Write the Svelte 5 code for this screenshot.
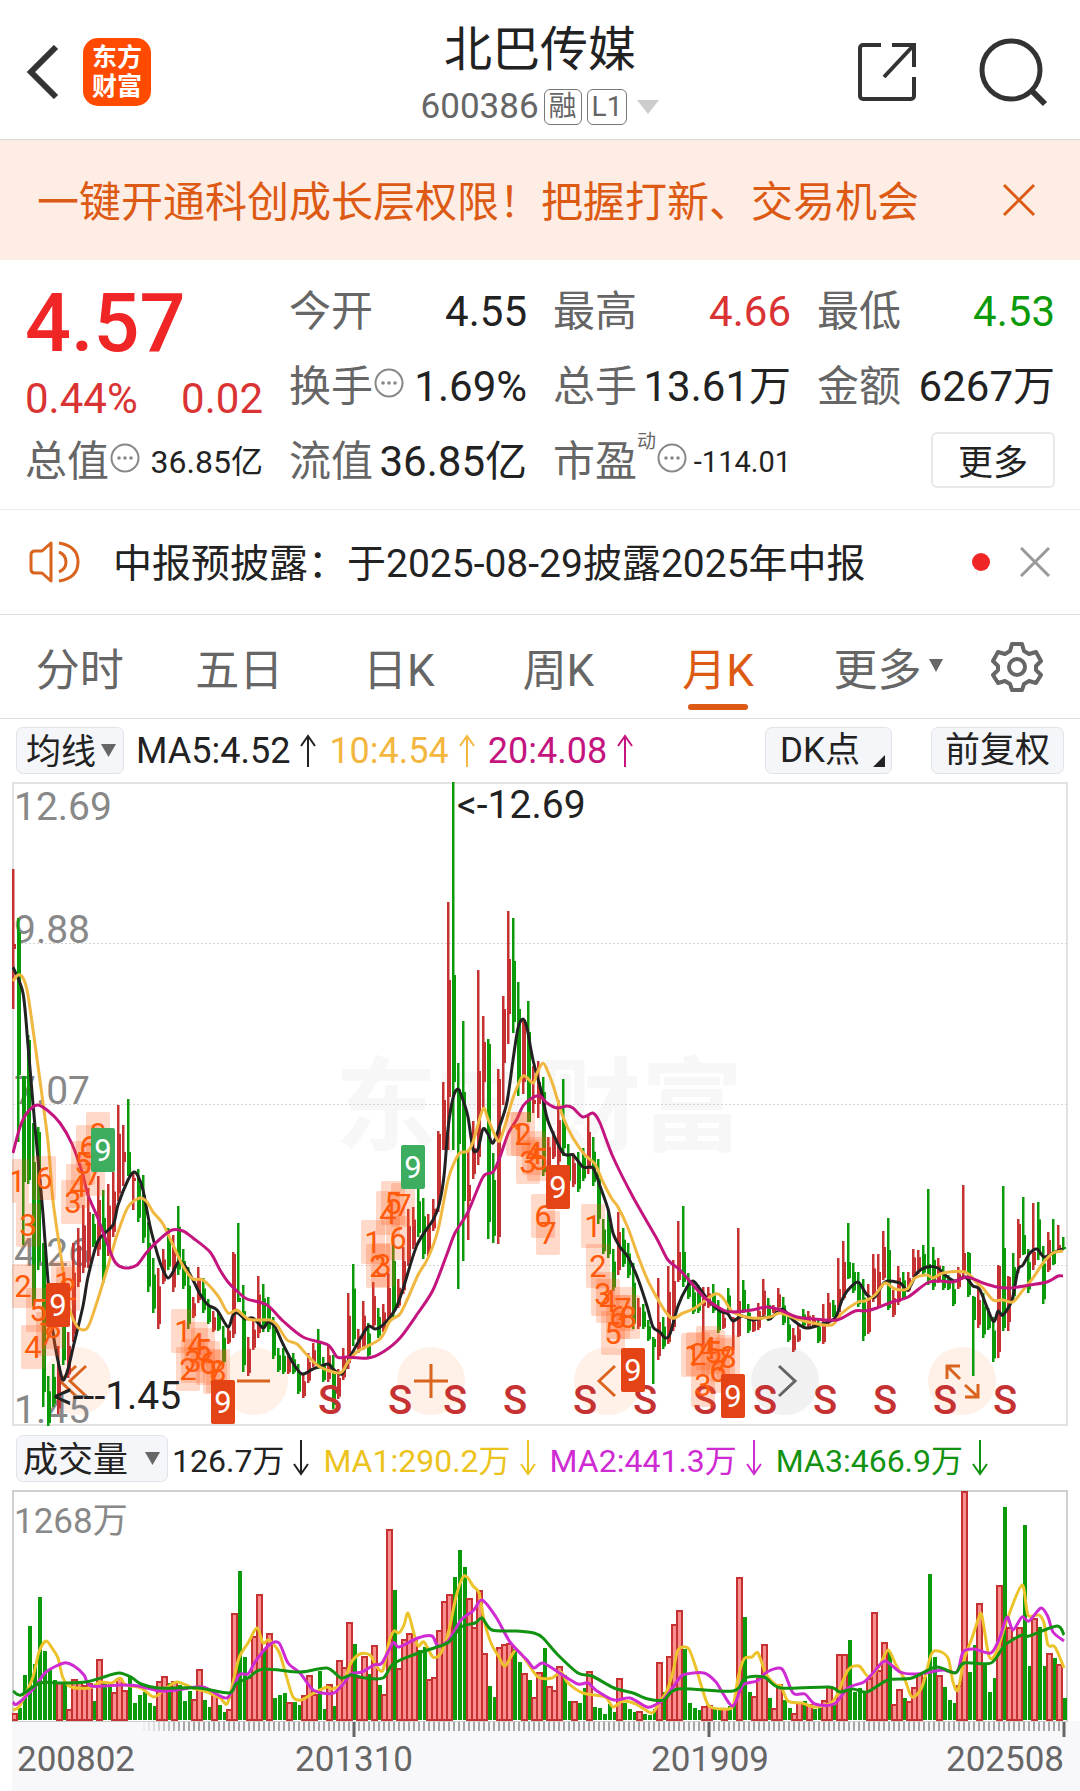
<script>
  const stats = [
    { label: '今开', value: '4.55' },
    { label: '最高', value: '4.66', tone: 'up' },
    { label: '最低', value: '4.53', tone: 'down' },
    { label: '换手', value: '1.69%', info: true },
    { label: '总手', value: '13.61万' },
    { label: '金额', value: '6267万' }
  ];

  const tabs = ['分时', '五日', '日K', '周K', '月K'];
  let activeTab = '月K';
  let showBanner = true;
  let showNotice = true;

  const priceAverages = [
    { text: 'MA5:4.52', color: '#222' },
    { text: '10:4.54', color: '#f3b63f' },
    { text: '20:4.08', color: '#c4157f' }
  ];

  const volumeAverages = [
    { text: '126.7万', color: '#222' },
    { text: 'MA1:290.2万', color: '#ecc31c' },
    { text: 'MA2:441.3万', color: '#cf2bd3' },
    { text: 'MA3:466.9万', color: '#119211' }
  ];

  // one candle per month: colour, high, low, then body top and bottom where known
  const candleData = `r,87,227,162,167 g,136,360,150,293 g,294,463,294,400 g,253,402,258,398 g,341,524,380,520 g,345,488,350,480
    g,461,625,470,610 g,594,645 g,582,625 r,564,632 g,524,583 r,550,596 r,461,560 r,446,505 r,423,491 r,406,486 g,432,465 r,394,474
    g,408,501 r,402,474 r,390,455 r,323,419 r,343,404,370,380 g,317,394,370,394 r,390,428,396,399 g,387,440 g,393,461 g,440,510 g,476,531 r,486,547
    r,467,502 g,446,488 r,453,510 g,424,493 g,467,507 g,485,547 r,515,536 r,485,521 g,496,531 g,517,542 r,529,550 g,529,549
    g,544,583 r,543,562 r,470,556,472,552 g,441,520,516,520 g,503,590 r,555,594 r,539,568 r,494,556 g,502,550 g,515,550 g,535,577 g,566,590
    g,566,592 r,571,592 g,571,592 g,582,612 r,592,616 r,571,601 r,561,585 g,547,587 g,575,600 r,562,600 g,573,627 r,587,617
    r,566,598 r,511,587 g,482,564 r,547,571 r,519,568 g,541,576 r,500,547 g,526,556 r,522,550 r,491,541 g,455,535 r,497,526
    r,465,512 r,427,484 r,425,467 g,404,455 g,416,477 r,432,474 r,417,449 r,349,430,352,420 r,300,368,318,368 r,120,368,198,315
    g,0,368,193,300 g,281,507,307,362 g,239,479,310,419 r,368,458,403,419 r,339,397,366,392 r,188,383,289,375 r,234,328,260,300
    g,257,457,262,440 g,371,461 r,287,462,297,455 r,214,323,227,281 r,129,262,177,232 g,136,251,179,240 g,200,314,227,300 r,236,312,240,300
    g,219,340,250,340 r,284,331,318,322 r,279,336,300,322 g,295,394,310,390 r,355,389 r,349,377 r,318,385 g,297,374,340,366 g,362,402
    r,371,405 g,370,410 g,366,399 r,332,392 g,355,404 g,377,442 g,437,472 g,427,476 g,467,509 r,430,493,450,488 g,446,485 g,461,496
    g,481,547 r,516,547 g,522,547 g,538,559 g,555,602,557,565 r,496,578,540,574 g,535,567 r,484,562,510,560 r,478,549,499,545 r,439,500,470,498
    g,424,505,470,500 g,491,517 g,501,532 g,503,531 r,505,563,520,524 r,505,526 g,502,531 g,518,551 r,531,547 g,506,531 r,535,568,536,538
    r,446,555,519,554 g,498,531 g,522,551 r,535,550 r,521,548 r,497,536 g,516,539 r,523,531 r,506,527 g,515,543 g,535,560
    r,546,570 r,542,560 g,527,545 r,529,545 r,533,545 g,538,561 r,522,562,540,560 r,511,543 g,518,535 r,476,536,507,530 r,459,518,480,516
    g,441,497,480,496 g,481,511 g,490,525 g,497,559 r,502,552,515,550 r,472,520 r,472,525,490,523 r,449,498,465,496 g,436,528,468,526
    r,508,535 r,484,523 g,490,518 r,490,510 r,467,495 r,468,492 g,463,493 g,407,503,482,498 g,465,508 r,476,501 g,484,508
    g,493,508 g,500,524 r,485,507 r,403,495,471,490 g,470,515,471,513 g,514,594,515,538 r,506,546 g,511,556 g,526,548 g,535,580
    r,483,576,484,570 g,404,549,466,546 r,494,549,495,540 g,471,518 r,437,491,442,476 g,415,473,453,472 g,467,511 r,421,488,470,483
    g,420,478 g,464,522 r,450,490,458,488 g,437,483,470,482 r,443,470,463,468 g,455,468,465,467`;

  const candles = candleData.trim().split(/\s+/).map((item, i) => {
    const [side, high, low, top, bottom] = item.split(',');
    const h = +high;
    const l = +low;
    return {
      x: 5 * i,
      h,
      l,
      top: top ? +top : h + (l - h) * 0.3,
      bottom: bottom ? +bottom : l - (l - h) * 0.08,
      color: side === 'r' ? '#c63232' : '#0a9a0a'
    };
  });

  const ma5 = '1,185 11,211 16,263 21,322 26,377 31,432 36,499 41,550 46,579 51,598 56,587 61,566 71,524 76,495 86,459 101,443 106,423 116,398 122,390 126,394 131,408 138,444 146,474 151,488 156,496 161,490 167,479 173,484 181,498 188,512 196,523 205,528 216,545 221,533 226,531 233,537 241,536 251,546 256,540 263,545 271,562 281,581 290,592 301,587 316,582 321,587 330,592 338,575 351,552 357,544 363,547 371,543 383,528 391,507 405,463 421,438 427,423 432,394 436,347 441,316 446,307 451,318 456,335 461,367 466,367 471,347 476,352 481,361 488,343 495,320 501,278 506,246 511,237 515,246 521,278 530,312 536,339 551,371 561,373 571,385 581,386 588,404 596,427 601,451 608,465 616,475 626,497 635,524 641,545 648,550 653,556 658,552 666,524 675,505 681,499 688,507 698,520 708,529 716,532 721,539 730,534 741,538 753,535 758,537 770,527 781,538 794,546 810,542 823,536 830,518 836,508 846,500 855,513 863,515 873,500 888,501 896,508 905,491 915,485 926,486 933,493 943,499 953,495 961,504 968,508 981,539 986,529 991,533 1000,518 1006,488 1011,483 1018,471 1025,467 1032,475 1041,471 1051,467';
  const ma10 = '1,199 6,193 11,196 16,213 26,284 36,360 41,419 51,488 56,520 61,537 68,547 76,545 85,520 96,484 105,453 116,425 128,416 135,420 141,430 151,442 161,463 171,484 181,497 191,498 206,514 216,531 225,528 236,537 248,538 258,538 265,543 275,558 285,562 295,573 308,585 328,591 336,580 346,569 368,557 378,539 388,532 396,516 406,493 416,476 426,448 436,398 443,379 448,371 456,369 461,360 471,327 476,337 486,359 491,350 501,316 511,294 521,301 525,291 531,281 536,290 541,303 551,335 561,356 573,373 583,382 591,400 600,417 606,425 616,446 626,474 638,503 658,535 671,531 683,526 703,512 711,516 721,530 740,536 758,535 768,531 785,537 801,541 820,543 830,531 846,520 853,519 863,513 873,501 883,507 895,507 903,496 915,493 921,496 931,491 953,490 965,501 971,506 981,518 991,518 1001,520 1011,508 1021,496 1031,481 1041,471 1051,469';
  const ma20 = '1,371 8,345 15,331 25,323 35,328 48,341 60,362 70,390 76,413 85,434 95,461 103,480 113,486 125,483 135,470 148,457 160,448 171,449 181,456 198,470 208,488 216,500 226,510 235,517 255,523 271,539 291,555 316,563 325,575 335,575 356,576 371,570 388,556 406,531 421,508 435,472 443,451 456,430 471,395 481,390 488,375 496,352 505,337 511,324 520,316 528,314 535,321 545,326 555,324 561,326 571,335 581,331 588,341 601,375 621,415 645,457 656,478 668,488 681,503 693,516 711,528 721,530 740,528 755,525 768,528 785,535 803,537 825,538 843,529 853,529 865,526 880,520 896,515 915,501 928,499 941,500 955,495 971,501 985,505 998,506 1018,503 1035,500 1046,494 1051,494';

  // sequence counts drawn over the candles: digit, x, y
  const counts = [
    [1, 5, 399], [6, 32, 396], [3, 16, 443], [2, 11, 504], [5, 26, 528], [4, 21, 565], [7, 36, 552], [8, 41, 545],
    [1, 51, 501], [2, 56, 507], [3, 61, 420], [4, 66, 404], [5, 71, 381], [6, 76, 365], [7, 81, 392], [8, 86, 352],
    [1, 171, 549], [2, 176, 587], [3, 181, 579], [4, 184, 562], [5, 191, 568], [6, 196, 581], [7, 203, 590], [8, 206, 589],
    [1, 361, 460], [2, 366, 484], [3, 371, 483], [4, 376, 431], [5, 381, 421], [6, 386, 456], [7, 391, 423],
    [1, 506, 352], [2, 511, 352], [3, 516, 380], [4, 522, 371], [5, 527, 377], [6, 531, 434], [7, 536, 451],
    [1, 581, 444], [2, 586, 484], [3, 591, 512], [4, 596, 519], [5, 601, 551], [6, 606, 535], [7, 611, 527], [8, 616, 535],
    [1, 681, 573], [2, 686, 572], [3, 691, 603], [4, 696, 566], [5, 701, 570], [6, 706, 589], [7, 711, 578], [8, 716, 575]
  ];

  const nines = [
    { x: 46, y: 523, color: '#e34315' },
    { x: 91, y: 368, color: '#3dae60' },
    { x: 211, y: 620, color: '#e34315' },
    { x: 401, y: 385, color: '#3dae60' },
    { x: 546, y: 405, color: '#e34315' },
    { x: 621, y: 588, color: '#e34315' },
    { x: 721, y: 614, color: '#e34315' }
  ];

  const sells = [318, 388, 443, 503, 573, 633, 693, 753, 813, 873, 933, 993];

  const priceLevels = [
    { text: '12.69', y: 38 },
    { text: '9.88', y: 161 },
    { text: '7.07', y: 322 },
    { text: '4.26', y: 484 },
    { text: '1.45', y: 641 }
  ];

  // volume bars: colour and top edge
  const volumeData = `r223 g218 g185 g136 g174 g107 g161 g180 g190 r192 g192 r219 r189 r192 r195 r193 g211 r169 g193 g192 r202 r188 r200 g187 g213
    g205 g202 g213 g216 r191 r186 g193 r191 g195 g211 g201 r209 r179 g210 g217 r203 g215 g222 r219 r123 g81 g167 r187 r146 r104
    g160 r143 g208 g205 g203 r212 g212 g215 r205 r185 r204 g181 g219 r194 g216 r170 r177 r132 g154 r187 r166 g184 r155 g195 r204
    r39 g100 r178 r149 r143 r150 g160 g157 r189 r187 r140 r111 r104 g87 g60 g77 r108 r137 r100 r163 g196 g207 r157 r154 r153
    g159 g172 r183 g190 r207 r182 g158 r196 r200 r176 g185 g211 r211 g213 g198 r181 g217 g218 g224 g214 g222 r188 g213 g219 g222
    r221 g224 g225 g219 r172 g202 r166 r134 r120 g159 g213 g218 g220 r216 r215 g219 g220 r218 g216 g212 r87 g127 g202 r206 r188
    r154 g208 r218 r194 g210 g218 r223 r212 g211 r214 g219 g218 r210 r196 g215 r164 r164 g150 g202 g198 g203 r188 r122 r180 r152
    g162 r214 r199 g208 r211 r197 r184 g187 g84 g167 r185 g197 g210 g213 r195 r1 g182 g155 r113 g175 g202 g188 r95 g17 r137
    r147 r137 g35 g176 r128 g137 g176 r163 g168 r174 g208`;

  const volumes = volumeData.trim().split(/\s+/).map((item, i) => ({
    x: 2 + 5 * i,
    y: +item.slice(1),
    up: item[0] === 'r'
  }));

  const vol1 = '1,220 7,217 14,203 21,187 27,162 34,151 40,158 46,168 51,188 59,197 78,198 88,192 100,193 108,188 114,195 129,198 142,207 153,199 165,192 181,198 195,202 208,208 215,214 220,197 227,168 236,153 245,138 251,153 257,150 267,162 274,185 281,207 289,210 300,204 315,197 320,199 331,193 339,173 348,164 358,165 365,177 371,180 377,152 382,141 387,143 392,135 396,123 401,140 406,156 412,152 421,167 429,163 437,140 444,107 451,87 456,88 461,96 467,103 472,130 479,153 487,167 493,176 504,160 515,172 526,187 540,188 549,182 556,193 571,203 593,207 601,217 611,211 624,214 640,223 647,212 654,203 661,182 666,160 676,158 683,175 690,198 697,216 711,219 721,216 726,188 732,169 740,167 746,163 754,184 764,195 769,196 776,211 790,213 803,217 819,213 826,203 836,180 847,176 857,187 867,177 876,160 884,175 893,190 900,207 910,197 919,165 926,161 936,168 941,192 946,200 952,170 960,148 967,127 970,126 977,166 984,163 995,130 1010,95 1016,125 1027,125 1032,133 1036,155 1043,157 1052,178';
  const vol2 = '1,212 5,214 22,198 34,182 52,173 62,176 72,185 79,196 109,195 126,196 148,201 165,200 191,197 215,208 227,185 236,184 243,172 257,155 267,153 276,173 288,183 300,199 310,203 322,203 332,193 339,184 350,182 362,175 370,173 381,153 387,157 406,148 420,146 426,156 437,150 449,130 461,121 470,110 484,127 498,152 515,170 522,178 531,173 549,184 566,194 576,193 585,201 602,210 618,208 635,217 643,215 652,209 662,196 671,185 692,183 704,192 710,202 721,216 731,195 745,191 755,182 770,179 781,203 793,204 803,214 822,214 836,198 852,192 862,182 873,171 888,182 902,184 919,182 931,180 945,182 951,162 962,159 979,163 988,147 995,127 1001,140 1010,127 1017,131 1029,118 1036,127 1041,142 1052,151';
  const vol3 = '1,201 9,205 28,193 50,193 74,192 95,186 107,183 119,187 129,194 146,198 186,198 217,203 224,194 236,188 251,179 288,182 315,178 329,188 339,185 353,188 371,188 381,174 401,165 422,158 437,152 449,137 463,133 470,128 480,140 505,141 522,143 531,148 545,164 566,183 580,186 602,198 621,203 636,209 652,210 666,199 721,201 733,188 752,187 769,198 817,197 828,202 841,199 855,202 876,190 900,188 924,177 943,183 952,173 979,173 993,155 1010,145 1017,146 1045,136 1052,145';

  const ticks = [];
  for (let i = 26; i < 211; i++) {
    ticks.push({ x: 2 + 5 * i, opacity: Math.min(1, (i - 25) / 9) });
  }

  // Catmull-Rom through the points, written as cubic segments
  function smooth(data) {
    const p = data.split(' ').map((pair) => pair.split(',').map(Number));
    let d = `M${p[0][0]} ${p[0][1]}`;
    for (let i = 0; i < p.length - 1; i++) {
      const a = p[i - 1] || p[i];
      const b = p[i];
      const c = p[i + 1];
      const e = p[i + 2] || c;
      d += `C${b[0] + (c[0] - a[0]) / 7} ${b[1] + (c[1] - a[1]) / 7} ${c[0] - (e[0] - b[0]) / 7} ${c[1] - (e[1] - b[1]) / 7} ${c[0]} ${c[1]}`;
    }
    return d;
  }
</script>

{#snippet info()}
  <svg class="info" viewBox="0 0 30 30" aria-hidden="true">
    <circle cx="15" cy="15" r="13.5" fill="none" stroke="#888" stroke-width="2" />
    <circle cx="9" cy="15" r="1.8" fill="#888" />
    <circle cx="15" cy="15" r="1.8" fill="#888" />
    <circle cx="21" cy="15" r="1.8" fill="#888" />
  </svg>
{/snippet}

<main>
  <header>
    <div class="side">
      <button class="icon-button" aria-label="返回">
        <svg width="32" height="54" viewBox="0 0 32 54"><path d="M29 2 4 27l25 25" fill="none" stroke="#333" stroke-width="6" /></svg>
      </button>
      <a class="logo" href="#home">东方<br />财富</a>
    </div>
    <div class="title">
      <h1>北巴传媒</h1>
      <div class="code">
        <span>600386</span>
        <span class="tag">融</span>
        <span class="tag">L1</span>
        <svg class="code-arrow" width="22" height="14" viewBox="0 0 22 14"><path d="M0 0h22L11 14z" fill="#ccc" /></svg>
      </div>
    </div>
    <div class="side right">
      <button class="icon-button" aria-label="分享">
        <svg width="60" height="60" viewBox="0 0 60 60" fill="none" stroke="#333" stroke-width="4">
          <path d="M24 3H6a3 3 0 0 0-3 3v48a3 3 0 0 0 3 3h48a3 3 0 0 0 3-3V35" />
          <path d="M35 3h22v22M56 4 27 35" />
        </svg>
      </button>
      <button class="icon-button" aria-label="搜索">
        <svg width="70" height="70" viewBox="0 0 70 70" fill="none" stroke="#333" stroke-width="5">
          <circle cx="33" cy="33" r="29" />
          <path d="m53 53 14 14" stroke-width="6" />
        </svg>
      </button>
    </div>
  </header>

  {#if showBanner}
    <section class="banner">
      <a href="#open">一键开通科创成长层权限！把握打新、交易机会</a>
      <button class="icon-button" aria-label="关闭横幅" on:click={() => (showBanner = false)}>
        <svg width="34" height="34" viewBox="0 0 34 34"><path d="m2 2 30 30M32 2 2 32" stroke="#dd5a14" stroke-width="3" /></svg>
      </button>
    </section>
  {/if}

  <section class="quote">
    <div class="price">
      <strong>4.57</strong>
      <div class="change"><span>0.44%</span><span>0.02</span></div>
    </div>
    {#each stats as stat}
      <div class="stat">
        <span class="label">{stat.label}</span>
        {#if stat.info}{@render info()}{/if}
        <span class="value {stat.tone || ''}">{stat.value}</span>
      </div>
    {/each}
    <div class="stat">
      <span class="label">总值</span>
      {@render info()}
      <span class="value small">36.85亿</span>
    </div>
    <div class="stat">
      <span class="label">流值</span>
      <span class="value">36.85亿</span>
    </div>
    <div class="stat">
      <span class="label">市盈</span>
      <sup>动</sup>
      {@render info()}
      <span class="value smaller">-114.01</span>
    </div>
    <div class="stat">
      <button class="more">更多</button>
    </div>
  </section>

  {#if showNotice}
    <section class="notice">
      <svg width="52" height="44" viewBox="0 0 52 44" fill="none" stroke="#d9641e" stroke-width="3">
        <path d="M22 3v38l-9-8H6q-4 0-4-4V15q0-4 4-4h7z" stroke-linejoin="round" />
        <path d="M30 12q7 3 7 10t-7 10M30 3q19 3 19 19T30 41" />
      </svg>
      <a href="#report">中报预披露：于2025-08-29披露2025年中报</a>
      <i class="dot"></i>
      <button class="icon-button" aria-label="关闭公告" on:click={() => (showNotice = false)}>
        <svg width="30" height="30" viewBox="0 0 30 30"><path d="m1 1 28 28M29 1 1 29" stroke="#999" stroke-width="3" /></svg>
      </button>
    </section>
  {/if}

  <nav>
    {#each tabs as tab}
      <button class="tab" class:active={tab === activeTab} on:click={() => (activeTab = tab)}>{tab}</button>
    {/each}
    <button class="tab">
      更多<svg class="tab-arrow" width="14" height="13" viewBox="0 0 14 13"><path d="M0 0h14L7 13z" fill="#666" /></svg>
    </button>
    <button class="icon-button" aria-label="设置">
      <svg width="52" height="52" viewBox="0 0 52 52" fill="none" stroke="#666" stroke-width="4" stroke-linejoin="round">
        <path d="M21 3h10l2 7 5 3 7-2 5 9-5 5v4l5 5-5 8-7-2-5 3-2 6H21l-2-6-5-3-7 2-5-8 5-5v-4l-5-5 5-9 7 2 5-3z" />
        <circle cx="26" cy="26" r="8" />
      </svg>
    </button>
  </nav>

  <div class="indicator">
    <div class="picker">
      <select aria-label="主图指标"><option>均线</option></select>
      <svg width="15" height="13" viewBox="0 0 15 13"><path d="M0 0h15L7.500 13z" fill="#666" /></svg>
    </div>
    <div class="averages">
      {#each priceAverages as item}
        <span class="average" style="color: {item.color}">
          {item.text}
          <svg width="18" height="34" viewBox="0 0 18 34" fill="none" stroke="currentColor" stroke-width="2"><path d="M9 33V2M2 12l7-10 7 10" /></svg>
        </span>
      {/each}
    </div>
    <button class="chip dk">DK点<svg width="12" height="12" viewBox="0 0 12 12"><path d="M12 0v12H0z" fill="#222" /></svg></button>
    <button class="chip">前复权</button>
  </div>

  <div class="chart">
    <div class="controls">
      <button aria-label="最早">
        <svg viewBox="0 0 68 68"><path d="M33 19 17 34l16 15M43 19 27 34l16 15" /></svg>
      </button>
      <button aria-label="缩小"><svg viewBox="0 0 68 68"><path d="M17 34h33" /></svg></button>
      <button aria-label="放大"><svg viewBox="0 0 68 68"><path d="M17 34h34M34 17v34" /></svg></button>
      <button aria-label="向左"><svg viewBox="0 0 68 68"><path d="M41 19 25 34l16 15" /></svg></button>
      <button class="gray" aria-label="向右"><svg viewBox="0 0 68 68"><path d="m28 19 16 15-16 15" /></svg></button>
      <button aria-label="全屏">
        <svg viewBox="0 0 68 68"><path d="M19 32V19h13M20 20l12 12M37 50h13V37M49 49 37 38" /></svg>
      </button>
    </div>
    <svg class="plot" viewBox="0 0 1056 644">
      <rect x="1" y="1" width="1054" height="642" fill="none" stroke="#e2e2e2" stroke-width="2" />
      <text class="watermark" x="527" y="361">东方财富</text>
      {#each [161, 322, 483] as y}
        <path d="M1 {y}.500H1055" stroke="#d4d4d4" stroke-dasharray="2 2" />
      {/each}
      {#each priceLevels as level}
        <text class="level" x="2" y={level.y}>{level.text}</text>
      {/each}
      {#each candles as c}
        <rect x={c.x} y={c.h} width="2.5" height={c.l - c.h} fill={c.color} />
        <rect x={c.x} y={c.top} width="4" height={Math.max(2, c.bottom - c.top)} fill={c.color} />
      {/each}
      <path class="line" d={smooth(ma5)} stroke="#222" />
      <path class="line" d={smooth(ma10)} stroke="#f0b840" />
      <path class="line" d={smooth(ma20)} stroke="#c4157f" />
      {#each sells as x}
        <text class="sell" {x} y="632">S</text>
      {/each}
      {#each counts as [digit, x, y]}
        <rect x={Math.max(0, x - 12)} y={y - 22} width={Math.min(24, x + 12)} height="44" rx="2" fill="#ff5a14" opacity="0.23" />
        <text class="count" {x} y={y + 11}>{digit}</text>
      {/each}
      {#each nines as nine}
        <rect x={nine.x - 12} y={nine.y - 22} width="24" height="44" rx="2" fill={nine.color} />
        <text class="count nine" x={nine.x} y={nine.y + 11}>9</text>
      {/each}
      <text class="note" x="445" y="36">&lt;-12.69</text>
      <text class="note" x="41" y="627">&lt;---1.45</text>
    </svg>
  </div>

  <div class="indicator volume">
    <div class="picker">
      <select aria-label="副图指标"><option>成交量</option></select>
      <svg width="15" height="13" viewBox="0 0 15 13"><path d="M0 0h15L7.500 13z" fill="#666" /></svg>
    </div>
    <div class="averages">
      {#each volumeAverages as item}
        <span class="average" style="color: {item.color}">
          {item.text}
          <svg width="16" height="36" viewBox="0 0 16 36" fill="none" stroke="currentColor" stroke-width="2"><path d="M8 0v34M1 24l7 10 7-10" /></svg>
        </span>
      {/each}
    </div>
  </div>

  <div class="chart">
    <svg class="plot" viewBox="0 0 1056 231">
      <path d="M1 231V1h1054v230" fill="none" stroke="#d0d0d0" stroke-width="2" />
      <text class="level small" x="2" y="43">1268万</text>
      {#each volumes as v}
        {#if v.up}
          <rect x={v.x - 2} y={v.y + 1} width="5" height={229 - v.y} fill="#fb8f8f" stroke="#c63232" stroke-width="2" />
        {:else}
          <rect x={v.x - 1} y={v.y} width="4" height={230 - v.y} fill="#0a9a0a" />
        {/if}
      {/each}
      <path class="line" d={smooth(vol1)} stroke="#ecc32a" />
      <path class="line" d={smooth(vol2)} stroke="#cf2bd3" />
      <path class="line" d={smooth(vol3)} stroke="#119211" />
    </svg>
  </div>

  <footer>
    <svg class="plot" viewBox="0 0 1068 16">
      <path d="M0 .500h1056" stroke="#ccc" />
      {#each ticks as tick}
        <path d="M{tick.x} 1v9" stroke="#555" opacity={tick.opacity} />
      {/each}
      <path d="M342 1v15M697 1v15M1052 1v15" stroke="#666" stroke-width="3" />
    </svg>
    <div class="dates">
      <time>200802</time>
      <time>201310</time>
      <time>201909</time>
      <time>202508</time>
    </div>
  </footer>
</main>

<style>
  :global(body) {
    background: #fff;
  }

  main {
    font-family: Roboto, "Noto Sans CJK SC", sans-serif;
    color: #222;
    overflow: hidden;
  }

  button,
  select {
    font-family: inherit;
    color: inherit;
    margin: 0;
    padding: 0;
    border: none;
    background: none;
    cursor: pointer;
  }

  a {
    color: inherit;
    text-decoration: none;
  }

  svg {
    display: block;
    flex: none;
  }

  .icon-button {
    display: flex;
    align-items: center;
    justify-content: center;
  }

  header {
    display: grid;
    grid-template-columns: 1fr auto 1fr;
    align-items: center;
    height: 139px;
    border-bottom: 1px solid #d8d8d8;
  }

  .side {
    display: flex;
    align-items: center;
    gap: 24px;
    padding: 4px 27px 0;
  }

  .right {
    justify-content: flex-end;
    gap: 61px;
    padding-right: 32px;
  }

  .logo {
    width: 68px;
    height: 68px;
    padding: 5px 0;
    box-sizing: border-box;
    border-radius: 15px;
    background: #ff4a00;
    color: #fff;
    font-size: 25px;
    font-weight: 700;
    line-height: 29px;
    text-align: center;
  }

  .title {
    display: flex;
    flex-direction: column;
    align-items: center;
    padding-top: 10px;
  }

  h1 {
    margin: 0;
    font-size: 48px;
    font-weight: 400;
    line-height: 64px;
  }

  .code {
    display: flex;
    align-items: center;
    gap: 5px;
    height: 50px;
    color: #666;
    font-size: 35px;
  }

  .tag {
    height: 34px;
    padding: 0 4px;
    border: 1px solid #777;
    border-radius: 6px;
    font-size: 28px;
    line-height: 34px;
  }

  .code-arrow {
    margin-left: 5px;
  }

  .banner {
    display: flex;
    align-items: center;
    justify-content: space-between;
    height: 120px;
    padding: 0 44px 0 37px;
    background: #fdede4;
    color: #dd5a14;
    font-size: 42px;
  }

  .banner a,
  .notice a {
    padding-bottom: 4px;
  }

  .quote {
    display: grid;
    grid-template-columns: repeat(4, 1fr);
    grid-auto-rows: 75px;
    column-gap: 26px;
    padding: 14px 25px 10px;
    border-bottom: 1px solid #ececec;
    font-size: 42px;
    line-height: 50px;
  }

  .price {
    grid-row: span 2;
    color: #f02525;
  }

  .price strong {
    display: block;
    font-size: 81px;
    font-weight: 500;
    line-height: 100px;
  }

  .change {
    display: flex;
    justify-content: space-between;
    color: #da3333;
  }

  .quote .stat:nth-child(4) {
    grid-column: 4;
  }

  .stat {
    display: flex;
    align-items: center;
    min-width: 0;
    white-space: nowrap;
  }

  .label {
    color: #666;
  }

  .value {
    margin-left: auto;
  }

  .value.small {
    font-size: 32px;
  }

  .value.smaller {
    font-size: 29px;
  }

  .up {
    color: #da3333;
  }

  .down {
    color: #0a9a0a;
  }

  sup {
    align-self: flex-start;
    color: #666;
    font-size: 19px;
    line-height: 36px;
  }

  .info {
    width: 30px;
    height: 30px;
    margin: 0 0 8px 1px;
  }

  .more {
    width: 124px;
    height: 56px;
    margin: 0 0 4px auto;
    padding-bottom: 4px;
    border: 2px solid #e8e8e8;
    border-radius: 6px;
    font-size: 35px;
  }

  .notice {
    display: flex;
    align-items: center;
    height: 104px;
    padding: 0 30px 0 29px;
    border-bottom: 1px solid #ddd;
    font-size: 39px;
  }

  .notice a {
    flex: 1;
    margin-left: 32px;
    white-space: nowrap;
  }

  .dot {
    width: 18px;
    height: 18px;
    margin-right: 30px;
    border-radius: 50%;
    background: #f02525;
  }

  nav {
    display: grid;
    grid-template-columns: repeat(6, 4fr) 3fr;
    height: 103px;
    padding-right: 3px;
    border-bottom: 1px solid #ddd;
  }

  .tab {
    position: relative;
    color: #666;
    font-size: 44px;
  }

  .tab.active {
    color: #dd5a14;
  }

  .tab.active::after {
    content: "";
    position: absolute;
    bottom: 8px;
    left: 50%;
    width: 60px;
    height: 6px;
    margin-left: -30px;
    border-radius: 3px;
    background: #dd5a14;
  }

  .tab-arrow {
    position: absolute;
    top: 44px;
    right: 14px;
  }

  .indicator {
    display: flex;
    align-items: center;
    height: 63px;
    padding: 0 16px;
    font-size: 36px;
  }

  .picker {
    display: grid;
    align-items: center;
  }

  .picker > * {
    grid-area: 1 / 1;
  }

  .picker svg {
    justify-self: end;
    margin-right: 8px;
    pointer-events: none;
  }

  select,
  .chip {
    height: 47px;
    box-sizing: border-box;
    border: 1px solid #e0e3e8;
    border-radius: 7px;
    background: #f5f6f9;
    font-size: 35px;
    line-height: 45px;
    white-space: nowrap;
  }

  select {
    appearance: none;
    width: 108px;
    padding: 2px 0 0 9px;
  }

  .averages {
    display: flex;
    flex: 1;
    gap: 12px;
    margin-left: 12px;
  }

  .average {
    display: flex;
    align-items: center;
    gap: 9px;
    white-space: nowrap;
  }

  .chip {
    padding: 0 13px;
  }

  .dk {
    display: flex;
    gap: 13px;
    margin-right: 39px;
    padding: 0 6px 0 14px;
  }

  .dk svg {
    align-self: flex-end;
    margin-bottom: 6px;
  }

  .volume {
    height: 64px;
    font-size: 32px;
  }

  .volume select {
    width: 152px;
    padding-left: 6px;
  }

  .volume .averages {
    gap: 14px;
    margin-left: 4px;
  }

  .chart {
    position: relative;
    margin: 0 12px;
  }

  .plot {
    position: relative;
    width: 100%;
    height: auto;
    pointer-events: none;
  }

  .controls {
    position: absolute;
    right: 0;
    bottom: 11px;
    left: 0;
    display: flex;
    justify-content: space-between;
    padding: 0 72px 0 31px;
  }

  .controls button {
    width: 68px;
    height: 68px;
    border-radius: 50%;
    background: #fff0e8;
  }

  .controls .gray {
    background: #f1f1f2;
  }

  .controls path {
    fill: none;
    stroke: #d9641e;
    stroke-width: 3;
  }

  .controls .gray path {
    stroke: #666;
  }

  .watermark {
    fill: #f7f7f7;
    font-size: 102px;
    font-weight: 700;
    text-anchor: middle;
  }

  .level {
    fill: #888;
    font-size: 39px;
  }

  .level.small {
    font-size: 35px;
  }

  .note {
    fill: #222;
    font-size: 39px;
  }

  .line {
    fill: none;
    stroke-width: 3;
    stroke-linejoin: round;
  }

  .sell {
    fill: #c63232;
    font-size: 40px;
    font-weight: 500;
    text-anchor: middle;
  }

  .count {
    fill: #ff5a0a;
    font-size: 31px;
    text-anchor: middle;
  }

  .nine {
    fill: #fff;
  }

  footer {
    margin-left: 12px;
    padding-bottom: 8px;
    background: #f8f8fa;
  }

  .dates {
    display: grid;
    grid-template-columns: 41fr 89fr 89fr 48fr;
    color: #666;
    font-size: 35px;
    line-height: 46px;
    text-align: center;
  }

  .dates time:first-child {
    padding-left: 5px;
    text-align: left;
  }

  .dates time:last-child {
    padding-right: 16px;
    text-align: right;
  }
</style>
